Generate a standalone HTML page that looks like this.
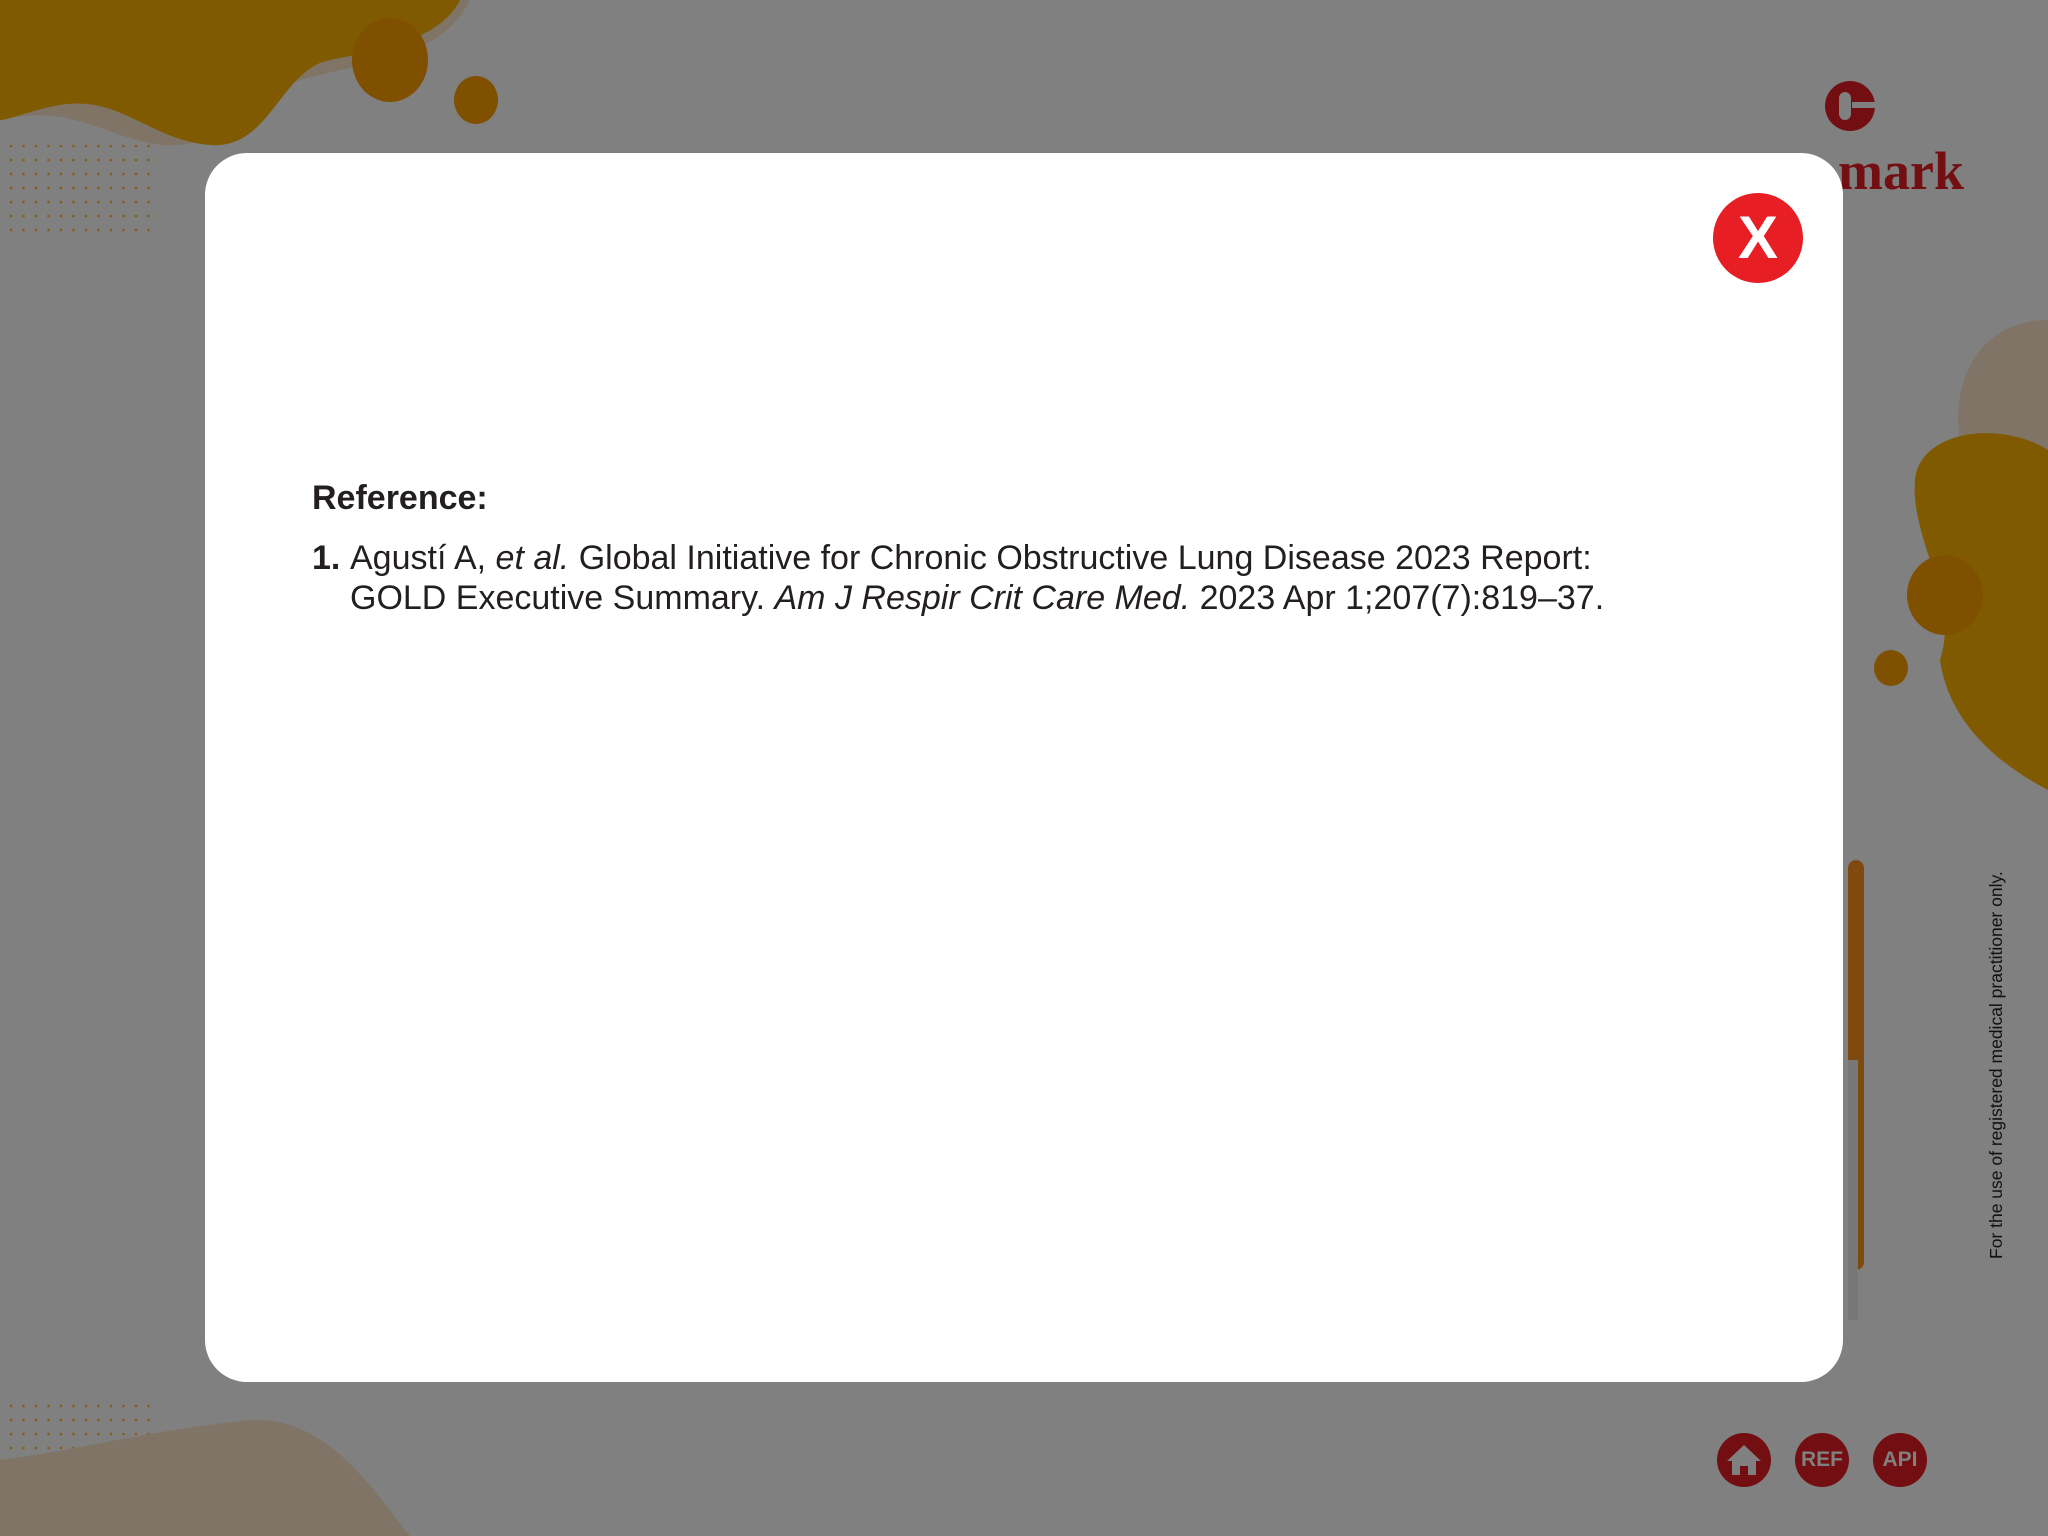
<!DOCTYPE html>
<html><head><meta charset="utf-8"><style>
html,body{margin:0;padding:0;}
body{width:2048px;height:1536px;position:relative;overflow:hidden;background:#808080;font-family:"Liberation Sans",Arial,sans-serif;}
.modal{position:absolute;left:205px;top:153px;width:1638px;height:1229px;background:#fff;border-radius:42px;}
.close{position:absolute;left:1713px;top:193px;width:90px;height:90px;border-radius:50%;background:#e81e25;color:#fff;font-weight:bold;font-size:60px;line-height:90px;text-align:center;}
.ref{position:absolute;left:312px;top:479px;color:#231f20;font-size:34px;}
.ref h3{margin:0 0 20px 0;font-size:34px;font-weight:bold;}
.item{position:relative;padding-left:38px;line-height:40px;}
.item b{position:absolute;left:0;top:0;}
.btn{position:absolute;top:1433px;width:54px;height:54px;border-radius:50%;background:#730f12;color:#808080;font-weight:bold;font-size:21px;line-height:54px;text-align:center;}
.vert{position:absolute;left:1986px;top:1259px;transform:rotate(-90deg);transform-origin:0 0;font-size:17.5px;color:#111;white-space:nowrap;}
.logo{position:absolute;left:1838px;top:140px;font-family:"Liberation Serif",serif;font-weight:bold;font-size:54px;color:#730f12;}
</style></head><body>
<svg width="2048" height="1536" style="position:absolute;left:0;top:0">
<defs><pattern id="dots" width="12.5" height="14" patternUnits="userSpaceOnUse"><circle cx="11" cy="6" r="1.3" fill="#8a5a10"/></pattern></defs>
<path d="M0 0 H470 C440 60 370 60 300 80 C250 95 230 140 180 145 C120 150 80 100 0 120 Z" fill="#7f7466"/>
<path d="M0 0 H460 C440 40 380 50 330 60 C280 70 270 150 210 145 C150 140 120 95 60 105 C30 110 10 120 0 120 Z" fill="#805a00"/>
<ellipse cx="390" cy="60" rx="38" ry="42" fill="#7f5000"/>
<ellipse cx="476" cy="100" rx="22" ry="24" fill="#7f5000"/>
<rect x="8" y="145" width="150" height="90" fill="url(#dots)"/>
<rect x="8" y="1398" width="150" height="90" fill="url(#dots)"/>
<path d="M0 1460 C80 1450 150 1430 250 1420 C330 1415 380 1500 410 1536 H0 Z" fill="#7f7466"/>
<path d="M2048 320 C1980 320 1950 380 1960 440 L2048 460 Z" fill="#7f7466"/>
<path d="M2048 450 C2000 420 1920 430 1915 480 C1910 540 1960 600 1940 660 C1950 730 2010 770 2048 790 Z" fill="#805a00"/>
<ellipse cx="1945" cy="595" rx="38" ry="40" fill="#7f5000"/>
<ellipse cx="1891" cy="668" rx="17" ry="18" fill="#7f5000"/>
<rect x="1848" y="860" width="16" height="410" rx="8" fill="#7f4a10"/>
<rect x="1848" y="1060" width="10" height="260" fill="#777"/>
</svg>
<div class="logo">mark</div>
<svg width="56" height="56" style="position:absolute;left:1822px;top:78px" viewBox="0 0 56 56"><circle cx="28" cy="28" r="25" fill="#730f12"/><rect x="17" y="14" width="12" height="28" rx="6" fill="#808080"/><rect x="30" y="24" width="26" height="6" fill="#808080"/></svg>
<div class="vert">For the use of registered medical practitioner only.</div>
<div class="btn" style="left:1717px"><svg width="54" height="54" viewBox="0 0 54 54"><path d="M27 12 L44 28 H39 V42 H31 V33 H23 V42 H15 V28 H10 Z" fill="#808080"/></svg></div>
<div class="btn" style="left:1795px">REF</div>
<div class="btn" style="left:1873px">API</div>
<div class="modal"></div>
<div class="close">X</div>
<div class="ref">
<h3>Reference:</h3>
<div class="item"><b>1.</b>Agustí A, <i>et al.</i> Global Initiative for Chronic Obstructive Lung Disease 2023 Report:<br>GOLD Executive Summary. <i>Am J Respir Crit Care Med.</i> 2023 Apr 1;207(7):819–37.</div>
</div>
</body></html>
